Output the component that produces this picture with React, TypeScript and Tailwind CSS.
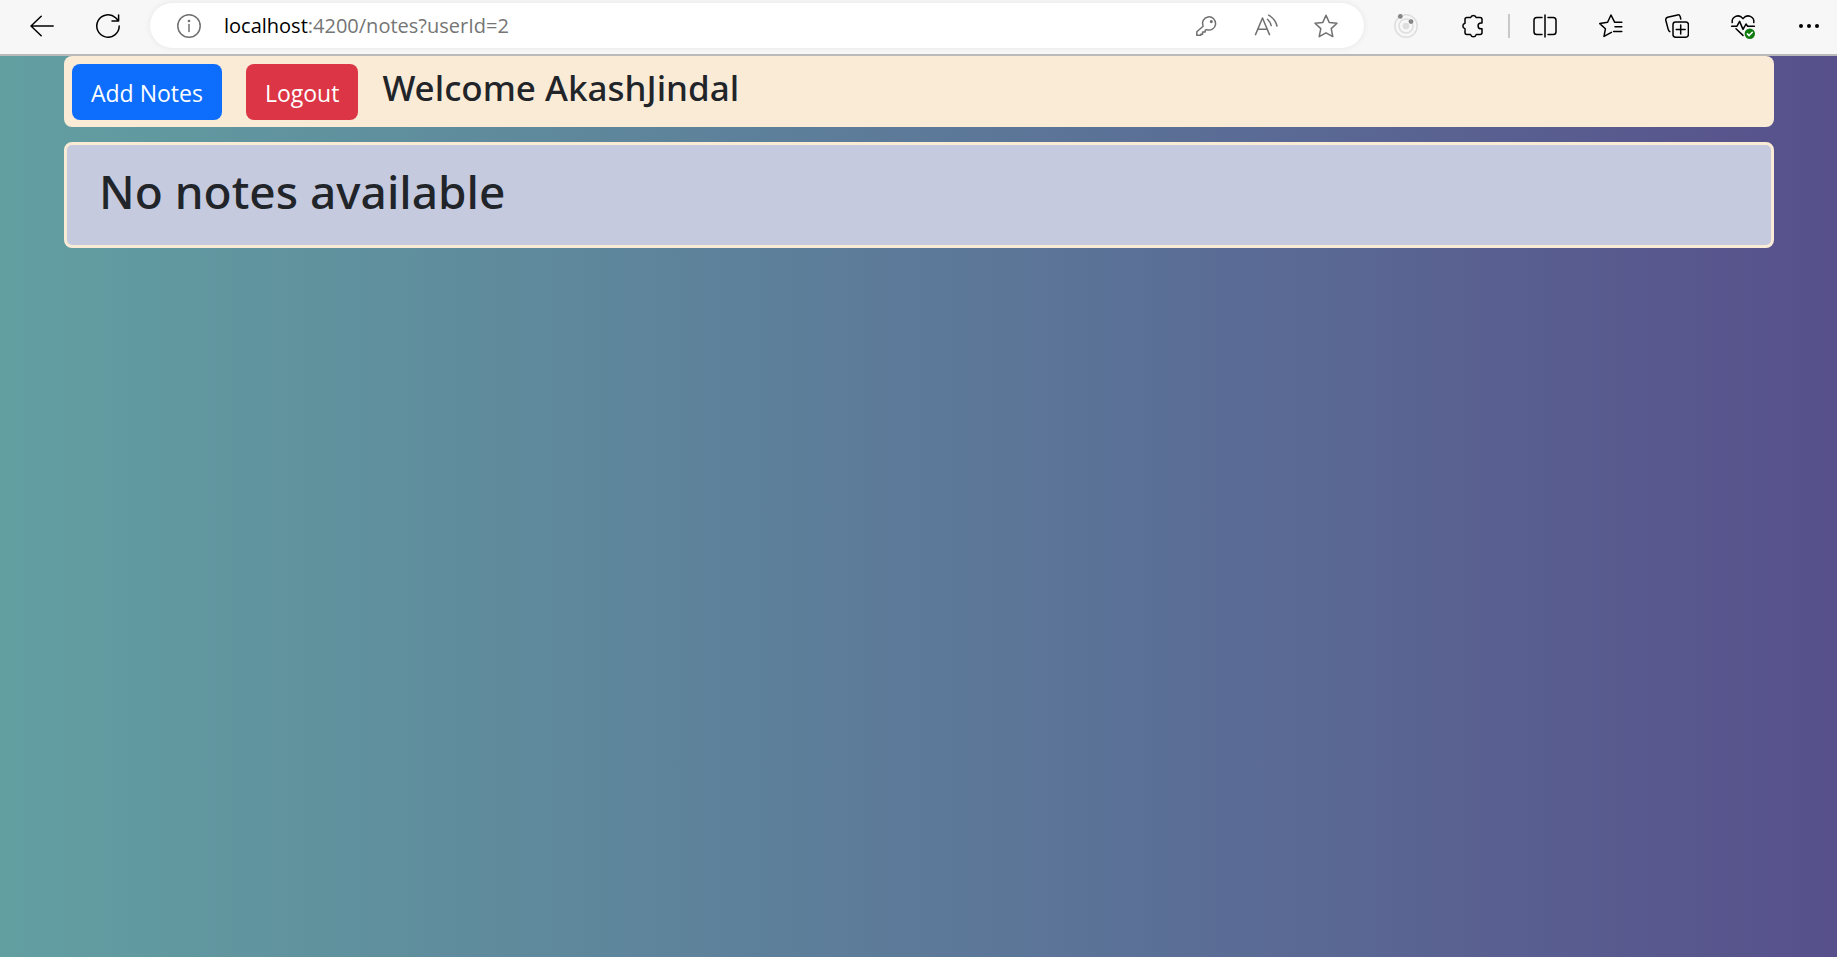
import React from "react";

type IconProps = { children: React.ReactNode; className?: string };

function Icon({ children, className = "" }: IconProps) {
  return (
    <svg
      viewBox="0 0 24 24"
      aria-hidden="true"
      className={`size-6 shrink-0 fill-none stroke-current ${className}`}
      strokeWidth="1.5"
      strokeLinecap="round"
      strokeLinejoin="round"
    >
      {children}
    </svg>
  );
}

function ToolButton({ label, children }: { label: string; children: React.ReactNode }) {
  return (
    <button type="button" aria-label={label} className="flex h-10 w-14 shrink-0 items-center justify-center text-black">
      {children}
    </button>
  );
}

function FieldButton({ label, children }: { label: string; children: React.ReactNode }) {
  return (
    <button type="button" aria-label={label} className="flex h-10 w-10 shrink-0 items-center justify-center text-[#707070]">
      {children}
    </button>
  );
}

function BrowserBar() {
  return (
    <header className="flex h-14 items-center border-b-2 border-[#bababa] bg-[#f7f7f7] pb-[3px] pl-3.5">
      <div className="flex shrink-0 gap-2.5">
        <ToolButton label="Back">
          <Icon>
            <path d="M23.2 12H1M11.2 2.2 1 12l10.2 9.8" />
          </Icon>
        </ToolButton>
        <ToolButton label="Refresh">
          <Icon>
            <path d="M23.2 12A11.2 11.2 0 1 1 19.6 3.8L22.4 6.6M22.6 1V7H16" />
          </Icon>
        </ToolButton>
      </div>

      <div className="mx-3.5 flex h-[45px] min-w-0 flex-1 items-center rounded-full bg-white pr-[18px] pl-[19px] shadow-[0_0_6px_rgba(0,0,0,0.08)]">
        <FieldButton label="View site information">
          <Icon>
            <circle cx="12" cy="12" r="11.2" />
            <path d="M12 10.5V17.5" />
            <circle cx="12" cy="7" r=".6" className="fill-current" />
          </Icon>
        </FieldButton>
        <a
          href="#notes"
          className="ml-[15px] min-w-0 flex-1 truncate text-xl text-[#757575]"
        >
          <span className="text-black">localhost</span>:4200/notes?userId=2
        </a>
        <div className="flex shrink-0 gap-5">
          <FieldButton label="Saved passwords">
            <Icon>
              <path d="M9.1 12.3A6.6 6.6 0 1 1 12.6 15.6L11.2 16.2V18H8.6V20.2H6.8V21.2H2.8V17.8L9.1 12.3Z" />
              <circle cx="17.3" cy="7.6" r=".8" className="fill-current" />
            </Icon>
          </FieldButton>
          <FieldButton label="Read aloud">
            <Icon>
              <path d="M1.5 20.6 8.5 4 15.5 20.6M4 15.2H13M13.5 5.2Q16.4 8 17.2 11.6M14.6 1.2Q21.4 4.8 23 12" />
            </Icon>
          </FieldButton>
          <FieldButton label="Add to favorites">
            <Icon>
              <path d="M12 1.2 15.2 8.4 23 9.2 17.2 14.6 18.8 22.6 12 18.8 5.2 22.6 6.8 14.6 1 9.2 8.8 8.4Z" />
            </Icon>
          </FieldButton>
        </div>
      </div>

      <div className="flex shrink-0 items-center gap-[11px]">
        <ToolButton label="Extension">
          <Icon className="text-[#dedede]">
            <circle cx="12" cy="12" r="11.2" />
            <circle cx="12" cy="12" r="7" />
            <circle cx="12" cy="12" r="2.6" className="fill-current" />
            <g className="fill-[#858585] stroke-none">
              <circle cx="6.3" cy="2.4" r="2.4" />
              <circle cx="17" cy="7.6" r="2.4" />
            </g>
          </Icon>
        </ToolButton>
        <ToolButton label="Extensions">
          <Icon>
            <path d="M4 5.6Q4 3.6 6 3.6H9.6A2.9 2.9 0 0 1 15.2 3.6H19Q21 3.6 21 5.6V9H20A2.9 2.9 0 0 0 20 14.8H21V18.6Q21 20.6 19 20.6H15.2A2.9 2.9 0 0 1 9.6 20.6H6Q4 20.6 4 18.6V14.8A2.9 2.9 0 0 1 4 9.2Z" />
          </Icon>
        </ToolButton>
      </div>
      <span className="mx-[7px] h-6 w-0.5 shrink-0 bg-[#c8c8c8]" />
      <div className="flex shrink-0 items-center gap-2.5">
        <ToolButton label="Split screen">
          <Icon>
            <path d="M9 3.5H3.8Q1 3.5 1 6.3V17.7Q1 20.5 3.8 20.5H9M15 3.5H20.2Q23 3.5 23 6.3V17.7Q23 20.5 20.2 20.5H15M12 1V23" />
          </Icon>
        </ToolButton>
        <ToolButton label="Favorites">
          <Icon>
            <path d="M22.8 8.2H15.6L12 1 8.6 8.2.8 9.6 6.4 14.8 5 22.4 12.4 18.4M16 12.8H22.8M14.6 17.4H22.8" />
          </Icon>
        </ToolButton>
        <ToolButton label="Collections">
          <Icon>
            <rect x="8" y="8" width="15.4" height="15.2" rx="2.6" />
            <path d="M15.7 11V20M11.2 15.5H20.2M4.8 17.6Q3.6 17 3.2 15.4L.8 6.2Q.4 4 2.6 3.2L12.6.9Q14.6.6 15.2 2.6L15.8 5" />
          </Icon>
        </ToolButton>
        <ToolButton label="Browser essentials">
          <Icon className="overflow-visible">
            <path d="M1.2 8.6C.4 2.8 7.6-.8 12 4.6 16.4-.8 23.6 2.8 22.8 8.6M.6 12.2H6L8.6 7.4 12 15.4 15 10 16.6 12.2H23.4M5 14.8 12 21.4" />
            <circle cx="18.8" cy="19.8" r="5.2" className="fill-[#107c10] stroke-none" />
            <path d="M16.4 19.9 18.1 21.6 21.3 18.2" className="stroke-white" />
          </Icon>
        </ToolButton>
        <ToolButton label="Settings and more">
          <Icon>
            <g className="fill-current stroke-none">
              <circle cx="4" cy="12" r="2" />
              <circle cx="12" cy="12" r="2" />
              <circle cx="20" cy="12" r="2" />
            </g>
          </Icon>
        </ToolButton>
      </div>
    </header>
  );
}

export default function App() {
  return (
    <div className="flex min-h-screen flex-col font-['Open_Sans','Noto_Sans',sans-serif] text-[#212529]">
      <BrowserBar />
      <main className="flex-1 bg-linear-to-r/srgb from-[#629fa1] via-[#5b7297] via-60% to-[#57508b] pr-[63px] pl-16">
        <nav className="flex items-start gap-6 rounded-lg bg-[#faebd7] px-2 pt-2 pb-[7px]">
          <button type="button" className="h-14 rounded-lg bg-[#0d6efd] px-[19px] pt-0.5 text-[23px] text-white">
            Add Notes
          </button>
          <button type="button" className="h-14 rounded-lg bg-[#dc3545] px-[19px] pt-0.5 text-[23px] text-white">
            Logout
          </button>
          <h3 className="font-['Noto_Sans',sans-serif] text-[35px] leading-12 font-medium">Welcome AkashJindal</h3>
        </nav>
        <section className="mt-[15px] rounded-lg border-3 border-[#faebd7] bg-[#c5cadf] px-8 pt-4 pb-6">
          <h1 className="font-['Noto_Sans',sans-serif] text-[46px] leading-15 font-medium">No notes available</h1>
        </section>
      </main>
    </div>
  );
}
